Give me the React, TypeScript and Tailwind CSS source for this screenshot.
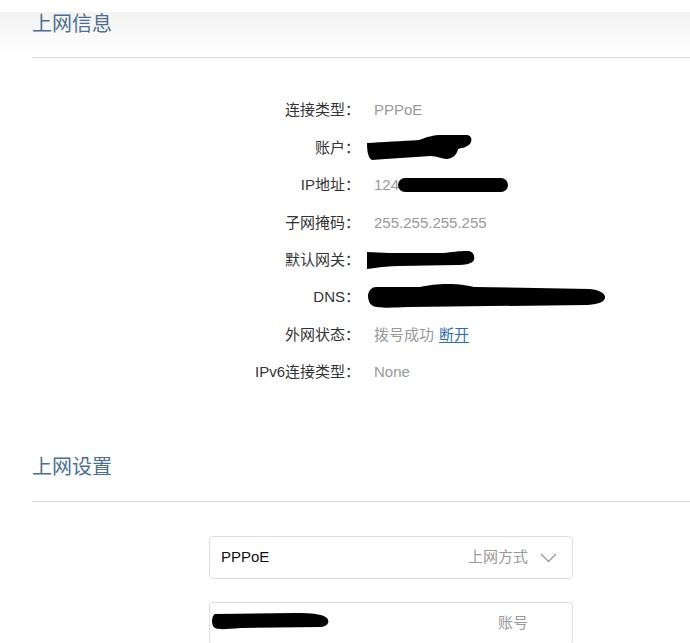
import React from 'react';

const font = { fontFamily: '"Liberation Sans", "Noto Sans CJK SC", sans-serif' };

const AccountBlob = () => (
  <svg width="105" height="25" viewBox="0 0 105 25" className="block shrink-0">
    <path d="M0 8 C15 7 35 6 52 5 C60 2 66 0 75 0 L99 0 C104 0 106 4 103 9 C99 13 94 13 91 14 C90 19 87 23 80 24 C74 24 71 21 63 21 C45 22 22 24 5 25 C1 23 0 16 0 8 Z" fill="#000" />
  </svg>
);

const PillBlob = ({ w, h }: { w: number; h: number }) => (
  <svg width={w} height={h} viewBox={`0 0 ${w} ${h}`} className="block shrink-0">
    <rect x="0" y="0" width={w} height={h} rx={h / 2} fill="#000" />
  </svg>
);

const GatewayBlob = () => (
  <svg width="108" height="18" viewBox="0 0 108 18" className="block shrink-0">
    <path d="M0 1 L22 2 L76 2 C86 1 91 0 100 0 C106 0 108 4 107 9 C105 13 98 14 90 14 L32 15 C22 15 14 16 8 17 L0 18 Z" fill="#000" />
  </svg>
);

const DnsBlob = () => (
  <svg width="237" height="24" viewBox="0 0 237 24" className="block shrink-0">
    <path d="M8 3 L52 3 C62 1 68 0 80 0 C92 0 97 1 106 3 L222 5 C231 6 237 9 237 13 C237 18 231 20 220 21 L40 23 C20 24 10 24 5 22 C1 20 0 15 0 11 C1 6 4 3 8 3 Z" fill="#000" />
  </svg>
);

const InputBlob = () => (
  <svg width="118" height="17" viewBox="0 0 118 17" className="block shrink-0">
    <path d="M4 1 L85 0 C100 0 112 1 116 5 C119 9 117 13 110 14 L30 15 C16 16 8 17 4 15 C0 13 0 3 4 1 Z" fill="#000" />
  </svg>
);

const Row = ({ label, children }: { label: string; children: React.ReactNode }) => (
  <div className="flex items-center h-[37.4px]">
    <div className="w-[328px] text-right text-[15px] text-[#333]">{label}</div>
    <div className="ml-[14px] flex items-center text-[15px] text-[#999]">{children}</div>
  </div>
);

const App: React.FC = () => {
  return (
    <div className="w-[690px] h-[643px] bg-white overflow-hidden" style={font}>
      <div className="pt-[12px]">
        <div className="h-[45px] bg-gradient-to-b from-[#f3f3f3] to-white pl-[32px]">
          <h2 className="text-[20px] leading-[23px] text-[#4a6e95] pt-[1px]">上网信息</h2>
        </div>
        <div className="ml-[32px] border-t border-[#dcdcdc]" />
      </div>

      <div className="pl-[32px] pt-[34px]">
        <Row label="连接类型：">PPPoE</Row>
        <Row label="账户：">
          <span className="-ml-[7px] -mt-[2px]">
            <AccountBlob />
          </span>
        </Row>
        <Row label="IP地址：">
          <span>124</span>
          <span className="-ml-[1px]">
            <PillBlob w={110} h={14} />
          </span>
        </Row>
        <Row label="子网掩码：">255.255.255.255</Row>
        <Row label="默认网关：">
          <span className="-ml-[7px]">
            <GatewayBlob />
          </span>
        </Row>
        <Row label="DNS：">
          <span className="-ml-[6px] -mt-[4px]">
            <DnsBlob />
          </span>
        </Row>
        <Row label="外网状态：">
          <span>拨号成功</span>
          <a className="ml-[5px] text-[#2b6cb5] underline underline-offset-2">断开</a>
        </Row>
        <Row label="IPv6连接类型：">None</Row>
      </div>

      <div className="mt-[65px]">
        <h2 className="pl-[32px] text-[20px] leading-[22px] text-[#4a6e95]">上网设置</h2>
        <div className="ml-[32px] mt-[23px] border-t border-[#dcdcdc]" />
      </div>

      <div className="pl-[209px] pt-[34px] flex flex-col gap-[23px]">
        <div className="w-[364px] h-[43px] border border-[#dedede] rounded-[4px] flex items-center pl-[11px] pr-[15px]">
          <span className="text-[15px] text-[#111]">PPPoE</span>
          <span className="ml-auto text-[15px] text-[#999]">上网方式</span>
          <svg width="17" height="10" viewBox="0 0 17 10" className="ml-[12px]">
            <path d="M1 1 L8.5 8.5 L16 1" fill="none" stroke="#999" strokeWidth="1.3" />
          </svg>
        </div>
        <div className="w-[364px] h-[43px] border border-[#dedede] rounded-[4px] flex items-center pl-[1px] pr-[44px]">
          <span className="-mt-[4px]">
            <InputBlob />
          </span>
          <span className="ml-auto text-[15px] text-[#999]">账号</span>
        </div>
      </div>
    </div>
  );
};

export default App;
